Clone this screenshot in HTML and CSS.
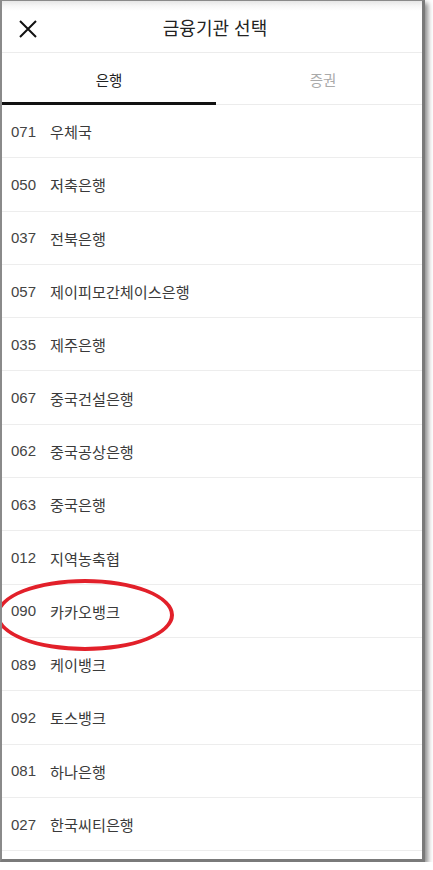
FILE: index.html
```html
<!DOCTYPE html>
<html lang="ko">
<head>
<meta charset="utf-8">
<link rel="stylesheet" href="styles.css">
</head>
<body>
<div class="frame">
  <header class="header">
    <svg class="close" width="20" height="20" viewBox="0 0 20 20"><path d="M2 2L18 18M18 2L2 18" stroke="#111" stroke-width="2" fill="none"/></svg>
    <h1 class="title">금융기관 선택</h1>
  </header>
  <nav class="tabs">
    <div class="tab active">은행</div>
    <div class="tab">증권</div>
  </nav>
  <ul class="list">
    <li class="row"><span class="code">071</span><span class="name">우체국</span></li>
    <li class="row"><span class="code">050</span><span class="name">저축은행</span></li>
    <li class="row"><span class="code">037</span><span class="name">전북은행</span></li>
    <li class="row"><span class="code">057</span><span class="name">제이피모간체이스은행</span></li>
    <li class="row"><span class="code">035</span><span class="name">제주은행</span></li>
    <li class="row"><span class="code">067</span><span class="name">중국건설은행</span></li>
    <li class="row"><span class="code">062</span><span class="name">중국공상은행</span></li>
    <li class="row"><span class="code">063</span><span class="name">중국은행</span></li>
    <li class="row"><span class="code">012</span><span class="name">지역농축협</span></li>
    <li class="row highlight"><span class="code">090</span><span class="name">카카오뱅크</span><span class="circle"></span></li>
    <li class="row"><span class="code">089</span><span class="name">케이뱅크</span></li>
    <li class="row"><span class="code">092</span><span class="name">토스뱅크</span></li>
    <li class="row"><span class="code">081</span><span class="name">하나은행</span></li>
    <li class="row"><span class="code">027</span><span class="name">한국씨티은행</span></li>
  </ul>
</div>
</body>
</html>
```
FILE: styles.css
```css
html, body {
  margin: 0;
  padding: 0;
  background: #fff;
}
body {
  font-family: "Liberation Sans", "Noto Sans CJK KR", sans-serif;
  color: #222;
  overflow: hidden;
}
.frame {
  box-sizing: border-box;
  width: 425px;
  height: 862px;
  border-left: 2px solid #8a8a8a;
  border-top: 1px solid #8a8a8a;
  border-right: 3px solid #7a7a7a;
  border-bottom: 3px solid #7a7a7a;
  box-shadow: 3px 3px 5px rgba(0,0,0,0.45);
  overflow: hidden;
  position: relative;
}
.header {
  height: 51px;
  border-bottom: 1px solid #ececec;
  display: flex;
  align-items: center;
  justify-content: center;
  position: relative;
  background: linear-gradient(#e6e6e6 0px, #f7f7f7 5px, #fff 10px);
}
.close {
  position: absolute;
  left: 16px;
  top: 18px;
}
.title {
  margin: 0 0 0 6px;
  font-size: 18px;
  font-weight: 400;
  color: #222;
  font-family: "Noto Sans CJK KR", sans-serif;
}
.tabs {
  display: grid;
  grid-template-columns: 214px 214px;
  height: 52px;
}
.tab {
  display: flex;
  align-items: center;
  justify-content: center;
  font-size: 14.5px;
  color: #aaa;
  border-bottom: 1px solid #ececec;
  padding-top: 1px;
  font-family: "Noto Sans CJK KR", sans-serif;
}
.tab.active {
  color: #222;
  border-bottom: 3px solid #111;
  padding-top: 3px;
}
.list {
  list-style: none;
  margin: 0;
  padding: 0;
}
.row {
  box-sizing: border-box;
  height: 53.3px;
  border-bottom: 1px solid #ededed;
  display: flex;
  align-items: center;
  padding-left: 9px;
  color: #3a3a3a;
  position: relative;
}
.code {
  width: 39px;
  font-size: 15px;
  color: #444;
}
.name {
  font-family: "Noto Sans CJK KR", sans-serif;
  font-size: 15.2px;
}
.circle {
  position: absolute;
  left: -6px;
  top: -6px;
  width: 170px;
  height: 64px;
  border: 4px solid #e2202a;
  border-radius: 50%;
}
```
